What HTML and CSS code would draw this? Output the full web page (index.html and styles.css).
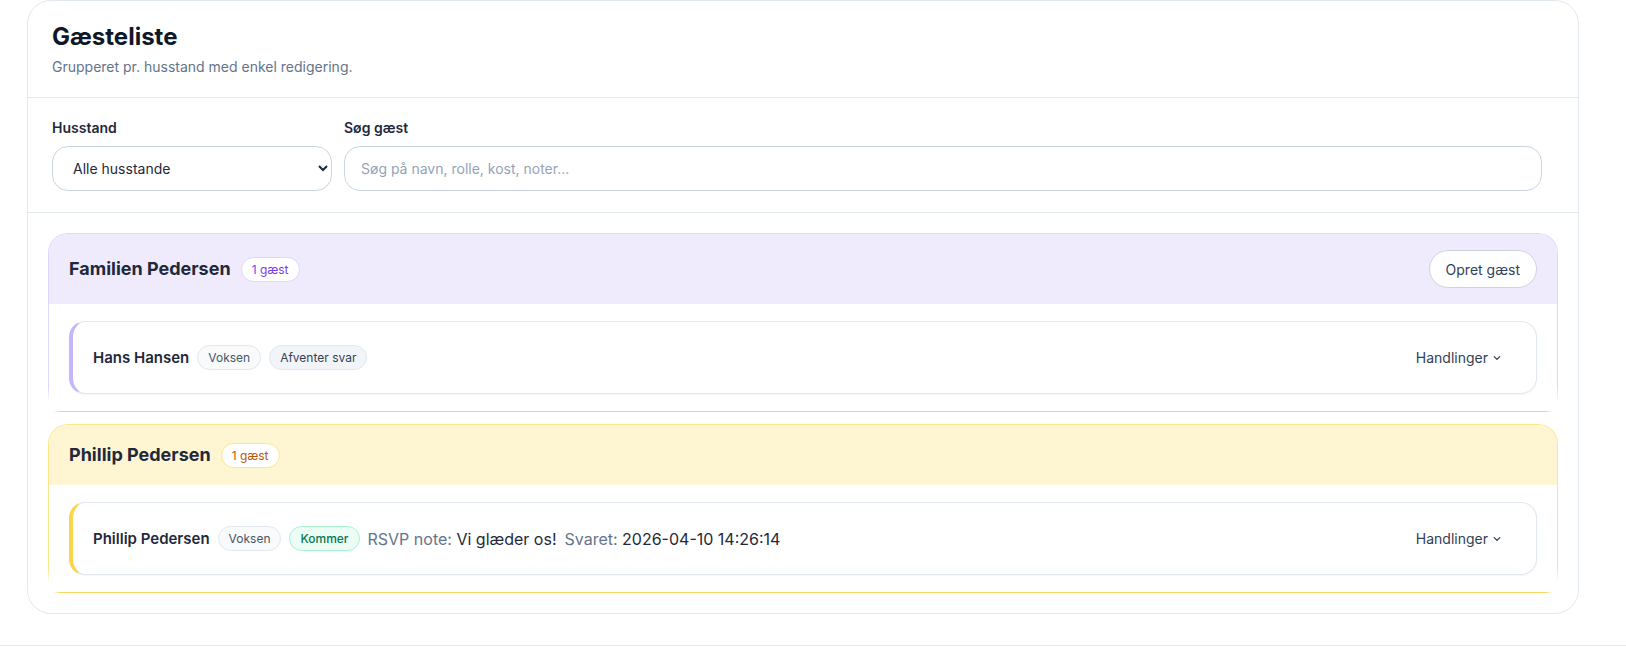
FILE: index.html
```html
<!DOCTYPE html>
<html lang="da">
<head>
  <meta charset="UTF-8">
  <meta name="viewport" content="width=device-width, initial-scale=1.0">
  <title>Gæsteliste</title>
  <link rel="stylesheet" href="styles.css">
</head>
<body>
  <div class="page">
    <section class="card">
      <div class="card-header">
        <h1>Gæsteliste</h1>
        <p class="subtitle">Grupperet pr. husstand med enkel redigering.</p>
      </div>

      <div class="filters">
        <div class="field">
          <label for="household">Husstand</label>
          <select id="household" name="household">
            <option>Alle husstande</option>
            <option>Familien Pedersen</option>
            <option>Phillip Pedersen</option>
          </select>
        </div>
        <div class="field">
          <label for="search">Søg gæst</label>
          <input type="text" id="search" name="search" placeholder="Søg på navn, rolle, kost, noter...">
        </div>
        <div class="filter-actions"></div>
      </div>

      <div class="groups">
        <div class="group group-purple">
          <div class="group-header">
            <h2>Familien Pedersen</h2>
            <span class="count">1 gæst</span>
            <button type="button" class="btn-create">Opret gæst</button>
          </div>
          <div class="group-body">
            <div class="guest">
              <span class="guest-name">Hans Hansen</span>
              <span class="pill">Voksen</span>
              <span class="pill pill-pending">Afventer svar</span>
              <button type="button" class="actions">Handlinger
                <svg class="chev" width="10" height="10" viewBox="0 0 10 10"><path d="M2.2 3.6 5 6.4l2.8-2.8" fill="none" stroke="currentColor" stroke-width="1.3" stroke-linecap="round" stroke-linejoin="round"/></svg>
              </button>
            </div>
          </div>
        </div>

        <div class="group group-yellow">
          <div class="group-header">
            <h2>Phillip Pedersen</h2>
            <span class="count">1 gæst</span>
          </div>
          <div class="group-body">
            <div class="guest">
              <span class="guest-name">Phillip Pedersen</span>
              <span class="pill">Voksen</span>
              <span class="pill pill-yes">Kommer</span>
              <span class="meta"><span class="meta-label">RSVP note:</span> Vi glæder os!</span>
              <span class="meta"><span class="meta-label">Svaret:</span> 2026-04-10 14:26:14</span>
              <button type="button" class="actions">Handlinger
                <svg class="chev" width="10" height="10" viewBox="0 0 10 10"><path d="M2.2 3.6 5 6.4l2.8-2.8" fill="none" stroke="currentColor" stroke-width="1.3" stroke-linecap="round" stroke-linejoin="round"/></svg>
              </button>
            </div>
          </div>
        </div>
      </div>
    </section>
  </div>
  <footer class="page-footer"></footer>
</body>
</html>
```

FILE: styles.css
```css
* {
  box-sizing: border-box;
}
body {
  margin: 0;
  font-family: Inter, "Noto Sans", sans-serif;
  color: #1e293b;
  background: #fff;
}
::-webkit-scrollbar {
  width: 15px;
  background: #2b2b2b;
}
::-webkit-scrollbar-thumb {
  background: #9f9f9f;
  border: 3px solid #2b2b2b;
  border-top-width: 0;
  border-radius: 0 0 7px 7px;
}
::-webkit-scrollbar-button:single-button:vertical:increment {
  display: block;
  height: 15px;
  background: conic-gradient(from -42deg at 50% 100%, #9f9f9f 84deg, transparent 0) no-repeat center / 9px 5px, #2b2b2b;
}
.page {
  padding: 0 32px 31px 27px;
}
.card {
  max-width: 1552px;
  border: 1px solid #e2e8f0;
  border-radius: 24px;
  background: #fff;
}
.card-header {
  padding: 20px 24px;
  border-bottom: 1px solid #e2e8f0;
}
.card-header h1 {
  margin: 0;
  font-size: 24px;
  line-height: 32px;
  font-weight: 700;
  color: #0f172a;
}
.subtitle {
  margin: 4px 0 0;
  font-size: 14px;
  line-height: 20px;
  color: #64748b;
}
.filters {
  display: grid;
  grid-template-columns: 280px 1fr auto;
  gap: 12px;
  padding: 20px 24px 21px;
  border-bottom: 1px solid #e2e8f0;
}
.field label {
  display: block;
  margin-bottom: 8px;
  font-size: 14px;
  line-height: 20px;
  font-weight: 600;
  color: #1e293b;
}
.field select,
.field input {
  display: block;
  width: 100%;
  height: 45px;
  padding: 0 12px 0 16px;
  border: 1px solid #cbd5e1;
  border-radius: 16px;
  background-color: #fff;
  font-family: inherit;
  font-size: 14px;
  color: #1e293b;
}
.field input {
  padding: 0 16px;
}
.field input::placeholder {
  color: #94a3b8;
}
.groups {
  display: flex;
  flex-direction: column;
  gap: 12px;
  padding: 20px;
}
.group {
  position: relative;
  border: 1px solid;
  border-radius: 20px 20px 0 0;
}
/* soft fade over the lower corners */
.group::before,
.group::after {
  content: "";
  position: absolute;
  bottom: -2px;
  width: 14px;
  height: 26px;
  pointer-events: none;
}
.group::before {
  left: -2px;
  background: radial-gradient(farthest-side at left bottom, #fff 45%, rgba(255, 255, 255, 0));
}
.group::after {
  right: -2px;
  background: radial-gradient(farthest-side at right bottom, #fff 45%, rgba(255, 255, 255, 0));
}
.group-header {
  display: flex;
  align-items: center;
  gap: 10px;
  padding: 16px 20px;
  border-radius: 19px 19px 0 0;
}
.group-header h2 {
  margin: 0;
  font-size: 18px;
  line-height: 28px;
  font-weight: 700;
  color: #1e293b;
}
.count {
  padding: 3px 10px;
  border: 1px solid;
  border-radius: 999px;
  background: #fff;
  font-size: 12px;
  line-height: 17px;
  font-weight: 400;
}
.group-purple {
  border-color: #ddd6fe;
  border-bottom-color: #d3cafb;
}
.group-purple .group-header {
  background: #efebfd;
}
.group-purple .count {
  border-color: #ddd6fe;
  color: #7c3aed;
}
.group-purple .guest {
  border-left-color: #c4b5fd;
}
.group-yellow {
  border-color: #fde68a;
  border-bottom-color: #f9d45e;
}
.group-yellow .group-header {
  background: #fef5d3;
}
.group-yellow .count {
  border-color: #fde68a;
  color: #b9560b;
}
.group-yellow .guest {
  border-left-color: #fcd34d;
}
.btn-create {
  margin-left: auto;
  height: 38px;
  padding: 0 16px;
  border: 1px solid #cbd5e1;
  border-radius: 999px;
  background: #fff;
  font-family: inherit;
  font-size: 14px;
  font-weight: 400;
  color: #334155;
}
.group-body {
  padding: 17px 20px;
  background: #fff;
}
.guest {
  display: flex;
  align-items: center;
  gap: 8px;
  min-height: 73px;
  padding: 16px 20px;
  border: 1px solid #e2e8f0;
  border-left: 4px solid;
  border-radius: 16px;
  background: #fff;
  box-shadow: 0 1px 2px rgba(15, 23, 42, 0.04);
}
.guest-name {
  font-size: 15px;
  line-height: 22px;
  font-weight: 600;
  color: #1e293b;
}
.pill {
  padding: 3px 10px;
  border: 1px solid #e2e8f0;
  border-radius: 999px;
  background: #f8fafc;
  font-size: 12px;
  line-height: 17px;
  font-weight: 400;
  color: #475569;
}
.pill-pending {
  background: #f1f5f9;
  color: #334155;
}
.pill-yes {
  border-color: #a7f3d0;
  background: #ecfdf5;
  color: #047857;
  font-weight: 500;
}
.meta {
  font-size: 16px;
  line-height: 24px;
  color: #1e293b;
}
.meta-label {
  color: #64748b;
}
.actions {
  margin-left: auto;
  display: flex;
  align-items: center;
  gap: 4px;
  padding: 9.5px 14px 9.5px 12px;
  border: 0;
  background: transparent;
  font-family: inherit;
  font-size: 14px;
  line-height: 20px;
  font-weight: 400;
  color: #334155;
}
.page-footer {
  height: 60px;
  border-top: 1px solid #e2e8f0;
}
```
